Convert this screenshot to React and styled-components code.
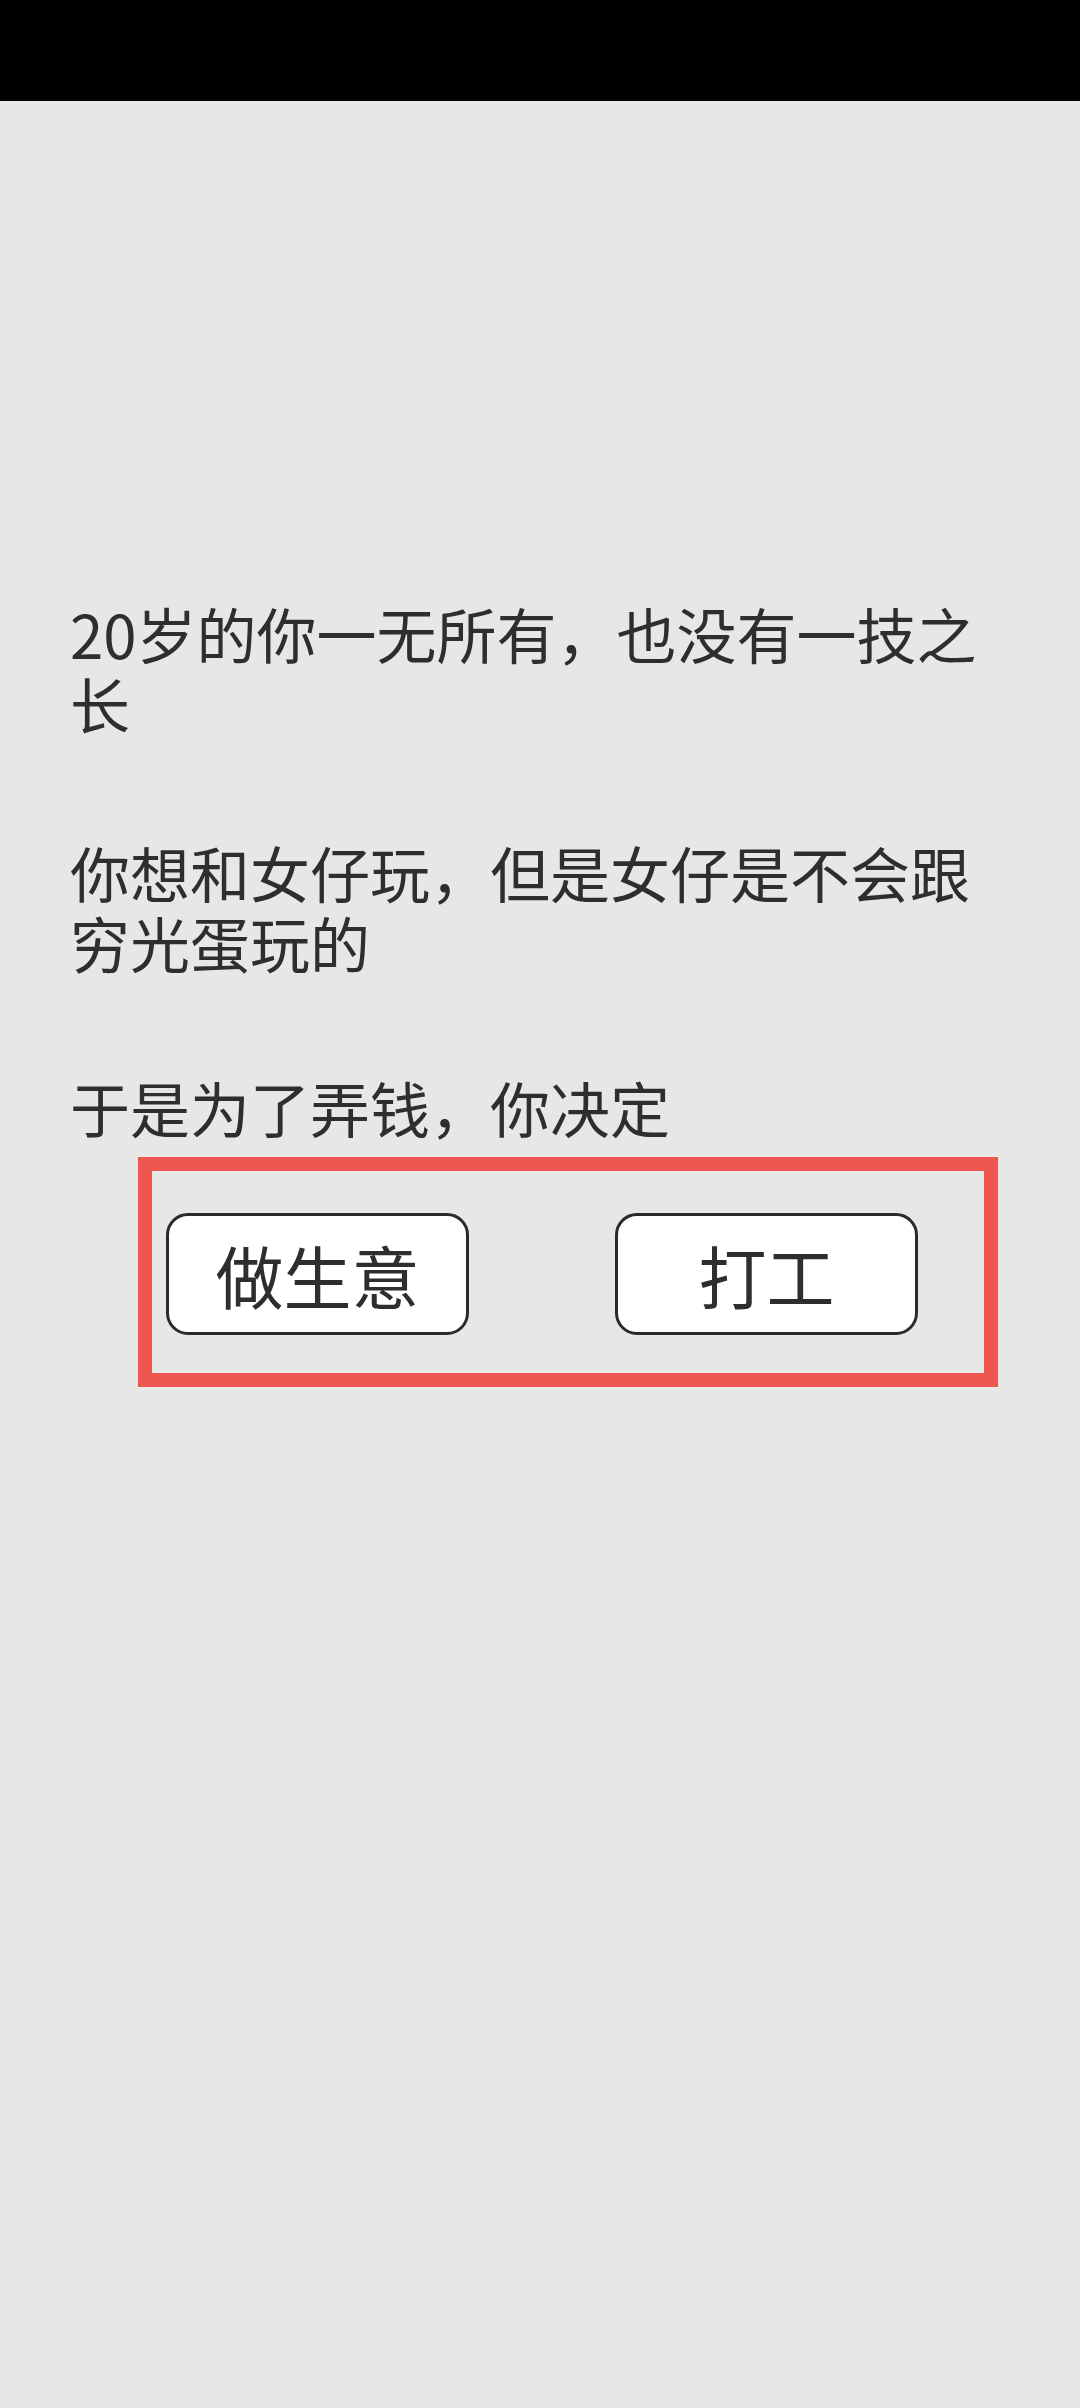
import styled, { createGlobalStyle } from "styled-components";

const Global = createGlobalStyle`
  html, body {
    margin: 0;
    padding: 0;
    background: #e7e7e7;
  }
  * {
    box-sizing: border-box;
  }
`;

const Page = styled.div`
  width: 1080px;
  min-height: 2408px;
  background: #e7e7e7;
  display: flex;
  flex-direction: column;
  font-family: "Noto Sans CJK SC", "Noto Sans", sans-serif;
  color: #2e2e2e;
`;

const StatusBar = styled.div`
  height: 101px;
  background: #000;
  flex-shrink: 0;
`;

const Story = styled.div`
  display: flex;
  flex-direction: column;
  padding: 497px 70px 0 70px;
`;

const Line = styled.p`
  margin: 0 0 ${(p) => p.$gap || 0}px 0;
  font-size: 60px;
  line-height: 70px;
`;

const Highlight = styled.div`
  margin: 15px 0 0 68px;
  width: 860px;
  border: 14px solid #ef5650;
  padding: 42px 0 38px 14px;
`;

const ButtonRow = styled.div`
  display: flex;
  gap: 146px;
`;

const Choice = styled.button`
  width: 303px;
  height: 122px;
  background: #fff;
  border: 3px solid #2a2a2a;
  border-radius: 22px;
  display: flex;
  align-items: center;
  justify-content: center;
  font-family: "Noto Sans CJK SC", "Noto Sans", sans-serif;
  font-size: 68px;
  color: #2e2e2e;
  padding: 0;
  cursor: pointer;
`;

export default function App() {
  return (
    <Page>
      <Global />
      <StatusBar />
      <Story>
        <Line $gap={99}>20岁的你一无所有，也没有一技之长</Line>
        <Line $gap={95}>你想和女仔玩，但是女仔是不会跟穷光蛋玩的</Line>
        <Line>于是为了弄钱，你决定</Line>
        <Highlight>
          <ButtonRow>
            <Choice>做生意</Choice>
            <Choice>打工</Choice>
          </ButtonRow>
        </Highlight>
      </Story>
    </Page>
  );
}
